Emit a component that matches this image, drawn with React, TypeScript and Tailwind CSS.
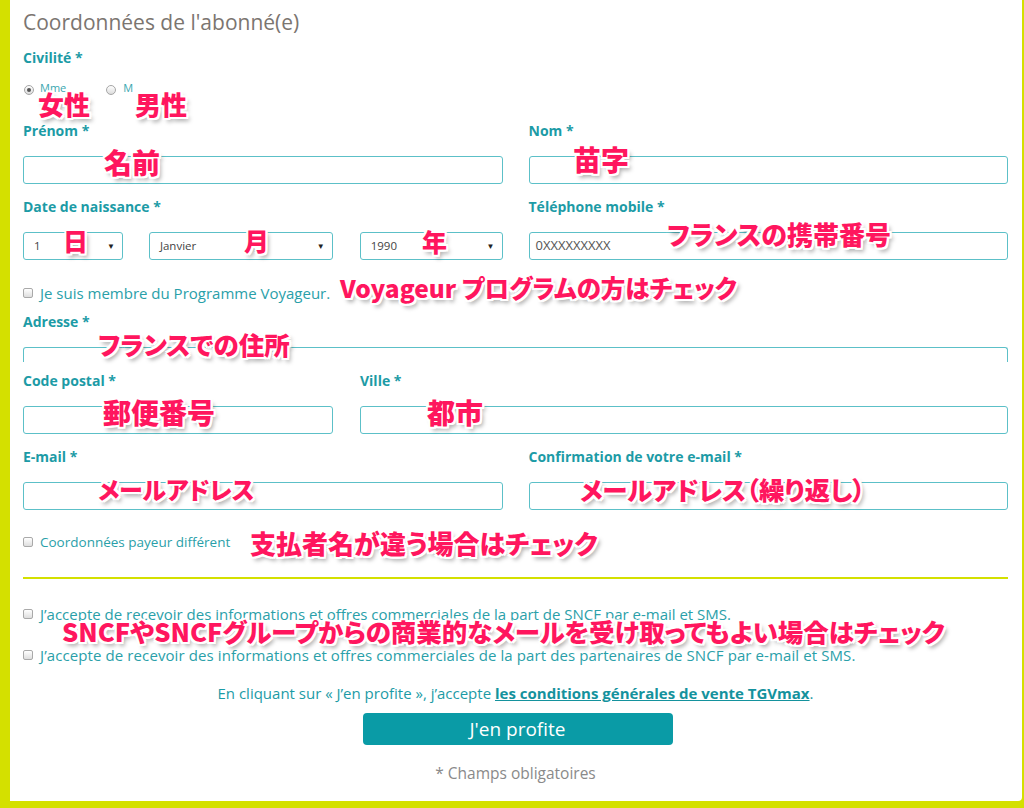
import React from 'react';

const NOTE =
  "absolute whitespace-nowrap leading-none font-['Noto_Sans_CJK_JP',sans-serif] font-black text-[#ff165e] [font-feature-settings:'palt'] [text-shadow:2px_0_0_#fff,-2px_0_0_#fff,0_2px_0_#fff,0_-2px_0_#fff,2px_2px_0_#fff,-2px_-2px_0_#fff,2px_-2px_0_#fff,-2px_2px_0_#fff,3px_4px_4px_rgba(0,0,0,0.35)]";

const Label: React.FC<{ children: React.ReactNode }> = ({ children }) => (
  <div className="h-[18px] leading-[18px] text-[14px] font-bold text-[#1c9ba6]">{children}</div>
);

const Input: React.FC<{ className?: string; value?: string }> = ({ className = '', value }) => (
  <div className={`h-[28px] mt-[16px] border border-[#5cc0c8] rounded-[3px] bg-white flex items-center px-[6px] text-[13px] text-[#555] ${className}`}>
    {value}
  </div>
);

const Select: React.FC<{ value: string; className: string }> = ({ value, className }) => (
  <div className={`h-[28px] border border-[#5cc0c8] rounded-[3px] bg-white flex items-center justify-between pl-[10px] pr-[7px] text-[11.5px] text-[#444] ${className}`}>
    <span>{value}</span>
    <span className="text-[8px] text-[#222]">▼</span>
  </div>
);

const Check: React.FC<{ children: React.ReactNode; className?: string }> = ({ children, className = 'text-[15px]' }) => (
  <div className={`h-[18px] flex items-center gap-[7px] text-[#2aa0a9] ${className}`}>
    <span className="w-[10px] h-[10px] rounded-[2px] border border-[#a9a9a9] bg-gradient-to-b from-white to-[#dedede]" />
    <span className="leading-[18px]">{children}</span>
  </div>
);

const Radio: React.FC<{ checked?: boolean }> = ({ checked }) => (
  <span className="w-[10px] h-[10px] rounded-full border border-[#a6a6a6] bg-gradient-to-b from-white to-[#dcdcdc] flex items-center justify-center">
    {checked && <span className="w-[4px] h-[4px] rounded-full bg-[#555]" />}
  </span>
);

export default function App() {
  return (
    <div className="min-h-[808px] bg-[#d4e000] pl-[10px] pr-[2px] pb-[7px] font-['Open_Sans','Noto_Sans',sans-serif]">
      <div className="relative bg-white rounded-br-[4px] pl-[13px] pr-[14px] pt-[10px] pb-[19px] flex flex-col">
        <h1 className="h-[24px] leading-[24px] text-[21px] text-[#7b7570] font-normal">Coordonnées de l'abonné(e)</h1>

        <div className="mt-[15px]"><Label>Civilité *</Label></div>
        <div className="mt-[15px] h-[16px] flex items-center text-[11px] text-[#3aa7b0]">
          <span className="ml-[1px]"><Radio checked /></span>
          <span className="ml-[6px] -mt-[4px]">Mme</span>
          <span className="ml-[40px]"><Radio /></span>
          <span className="ml-[7px] -mt-[4px]">M</span>
        </div>

        <div className="mt-[24px] grid grid-cols-2 gap-x-[26px]">
          <div><Label>Prénom *</Label><Input /></div>
          <div><Label>Nom *</Label><Input /></div>
        </div>

        <div className="mt-[14px] grid grid-cols-2 gap-x-[26px]">
          <div>
            <Label>Date de naissance *</Label>
            <div className="mt-[16px] flex">
              <Select value="1" className="w-[100px]" />
              <Select value="Janvier" className="w-[184px] ml-[26px]" />
              <Select value="1990" className="w-[143px] ml-[27px]" />
            </div>
          </div>
          <div><Label>Téléphone mobile *</Label><Input value="0XXXXXXXXX" /></div>
        </div>

        <Check className="mt-[24px] text-[15px]">Je suis membre du Programme Voyageur.</Check>

        <div className="mt-[11px]"><Label>Adresse *</Label></div>
        <div className="mt-[16px] h-[15px] border-t border-x border-[#5cc0c8] rounded-t-[3px]" />

        <div className="mt-[10px] flex">
          <div className="w-[310px]"><Label>Code postal *</Label><Input /></div>
          <div className="flex-1 ml-[27px]"><Label>Ville *</Label><Input /></div>
        </div>

        <div className="mt-[14px] grid grid-cols-2 gap-x-[26px]">
          <div><Label>E-mail *</Label><Input /></div>
          <div><Label>Confirmation de votre e-mail *</Label><Input /></div>
        </div>

        <Check className="mt-[23px] text-[13.5px]">Coordonnées payeur différent</Check>

        <div className="mt-[26px] h-[2px] bg-[#d4e000]" />

        <Check className="mt-[26px] text-[15px]">J’accepte de recevoir des informations et offres commerciales de la part de SNCF par e-mail et SMS.</Check>
        <Check className="mt-[23px] text-[15px] tracking-[0.1px]">J’accepte de recevoir des informations et offres commerciales de la part des partenaires de SNCF par e-mail et SMS.</Check>

        <p className="mt-[20px] h-[18px] leading-[18px] text-center text-[15px] text-[#1c9ba6]">
          En cliquant sur « J’en profite », j’accepte{' '}
          <a className="font-bold underline text-[#14929d]">les conditions générales de vente TGVmax</a>.
        </p>

        <div className="mt-[11px] flex justify-center">
          <button type="button" className="w-[310px] h-[32px] rounded-[4px] bg-[#0a9ba6] text-white text-[19px] leading-none ml-[4px]">
            J'en profite
          </button>
        </div>

        <p className="mt-[19px] h-[18px] leading-[18px] text-center text-[15.5px] text-[#8a8a8a]">* Champs obligatoires</p>

        {/* annotations */}
        <span className={`${NOTE} left-[28px] top-[91px] text-[26px]`}>女性</span>
        <span className={`${NOTE} left-[125px] top-[91px] text-[26px]`}>男性</span>
        <span className={`${NOTE} left-[94px] top-[148px] text-[28px]`}>名前</span>
        <span className={`${NOTE} left-[563px] top-[145px] text-[28px]`}>苗字</span>
        <span className={`${NOTE} left-[53px] top-[228px] text-[25px]`}>日</span>
        <span className={`${NOTE} left-[234px] top-[228px] text-[25px]`}>月</span>
        <span className={`${NOTE} left-[412px] top-[229px] text-[25px]`}>年</span>
        <span className={`${NOTE} left-[657px] top-[221px] text-[26px]`}>フランスの携帯番号</span>
        <span className={`${NOTE} left-[330px] top-[276px] text-[24.5px]`}>Voyageur プログラムの方はチェック</span>
        <span className={`${NOTE} left-[88px] top-[331px] text-[25.5px]`}>フランスでの住所</span>
        <span className={`${NOTE} left-[93px] top-[398px] text-[28px]`}>郵便番号</span>
        <span className={`${NOTE} left-[417px] top-[398px] text-[28px]`}>都市</span>
        <span className={`${NOTE} left-[88px] top-[477px] text-[24px]`}>メールアドレス</span>
        <span className={`${NOTE} left-[570px] top-[476px] text-[25.5px]`}>メールアドレス（繰り返し）</span>
        <span className={`${NOTE} left-[240px] top-[530px] text-[26px]`}>支払者名が違う場合はチェック</span>
        <span className={`${NOTE} left-[52px] top-[618px] text-[25.5px]`}>SNCFやSNCFグループからの商業的なメールを受け取ってもよい場合はチェック</span>
      </div>
    </div>
  );
}
